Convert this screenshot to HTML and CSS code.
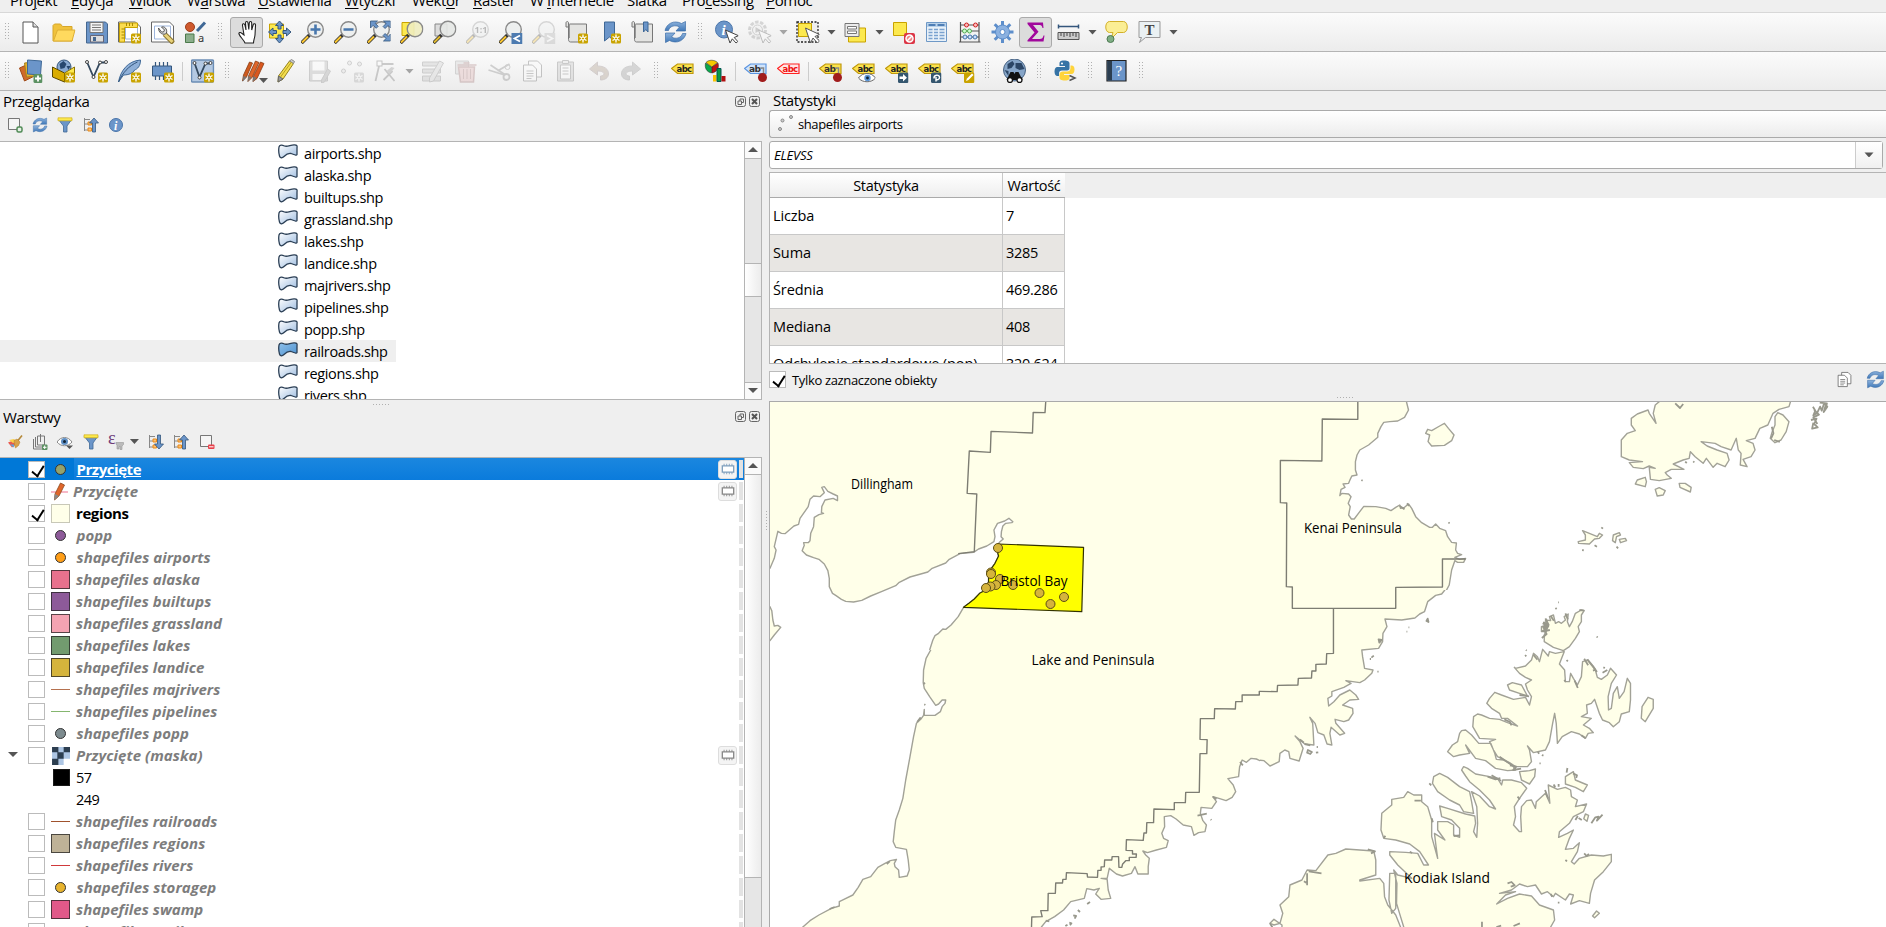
FILE: index.html
```html
<!DOCTYPE html>
<html lang="pl">
<head>
<meta charset="utf-8">
<title>QGIS</title>
<link rel="stylesheet" href="styles.css">
</head>
<body>
<svg class="defs" width="0" height="0" aria-hidden="true">
<defs>
<linearGradient id="gShp" x1="0" y1="0" x2="1" y2="1"><stop offset="0" stop-color="#fff"/><stop offset="1" stop-color="#9dbce0"/></linearGradient>
<linearGradient id="gShpOn" x1="0" y1="0" x2="1" y2="1"><stop offset="0" stop-color="#8fc0ea"/><stop offset="1" stop-color="#4d92d0"/></linearGradient>
<linearGradient id="gBlue" x1="0" y1="0" x2="0" y2="1"><stop offset="0" stop-color="#8db2dc"/><stop offset="1" stop-color="#3f78b8"/></linearGradient>
<symbol id="star" viewBox="0 0 24 24"><rect x="13.500" y="13.500" width="10" height="10" rx="1.500" fill="#c9a300"/><path d="M18.500 14.500v8M15 16.500l7 4M15 20.500l7-4" stroke="#fff" stroke-width="1.300"/><circle cx="18.500" cy="18.500" r="1.500" fill="#c9a300" stroke="#fff"/></symbol>
<symbol id="new" viewBox="0 0 24 24"><path d="M4.500 2h10l5 5v16h-15z" fill="#fff" stroke="#555"/><path d="M14.500 2v5h5" fill="#ddd" stroke="#555"/></symbol>
<symbol id="open" viewBox="0 0 24 24"><path d="M1.500 21V5.500L3 4h6l2 2.500h9.500V21z" fill="#f0c23c" stroke="#d6a62a"/><path d="M2 21 6 10h17.500L20.500 21z" fill="#ffd95e" stroke="#dcae34"/></symbol>
<symbol id="save" viewBox="0 0 24 24"><path d="M2 2h19l2 2v19H2z" fill="#6b95c9" stroke="#45678f"/><path d="M5.500 2.500h13v10h-13z" fill="#f4f4f4" stroke="#777"/><path d="M7.500 5h9M7.500 7.500h9M7.500 10h9" stroke="#777"/><path d="M6 15.500h13V22H6z" fill="#ddd" stroke="#667"/><path d="M8.500 17h3v4h-3z" fill="#45678f"/></symbol>
<symbol id="layout" viewBox="0 0 24 24"><path d="M1 2h17l5 5v15H1z" fill="#fff" stroke="#666"/><path d="M8 7h12v12H8z" fill="#fff" stroke="#9db5dd"/><path d="M2 3h18v4.500H7V22H2z" fill="#fbdc50" stroke="#c9a300"/><path d="M4 9h3M4 12h3M4 15h3M4 18h3M9 3v3M12 3v3M15 3v3" stroke="#a98900"/><use href="#star"/></symbol>
<symbol id="manager" viewBox="0 0 24 24"><path d="M1 2h18l4 4v16H1z" fill="#fff" stroke="#666"/><path d="M4 6h16v13H4z" fill="#fff" stroke="#9db5dd"/><path d="M14 14l9 9" stroke="#8a7430" stroke-width="5"/><path d="M14 14l8 8" stroke="#e8d27a" stroke-width="3"/><path d="M8 8c0 4 3 7 7 6l1-1c1-4-2-7-5-6l3 3-1 2-2 0z" fill="#ddd" stroke="#555"/></symbol>
<symbol id="style" viewBox="0 0 24 24"><circle cx="6.500" cy="7" r="4.500" fill="#cf5a2e" stroke="#9d3f1c"/><path d="M13.500 11l8-8.500" stroke="#3f6896" stroke-width="3"/><path d="M2 14h8.500v8.500H2z" fill="#8cae8c" stroke="#4b7a4b"/><text x="14.500" y="22" font-size="11" font-family="Noto Sans" fill="#333">a</text></symbol>
<symbol id="hand" viewBox="0 0 24 24"><path d="M8 23c-1-3-5-6-6-9-.5-1.500 1.500-2 2.800-.7L7 15 5.500 5.500c-.3-2 1.900-2.300 2.400-.5L9 10 8.500 3c0-2 2.300-2 2.500 0l.8 6.500.5-6.700c.2-1.800 2.400-1.600 2.400.3v7l1.500-5.300c.6-1.700 2.600-1.100 2.300.7L18 15c-.5 4-1.500 5-1.500 8z" transform="translate(2.500 0)" fill="#fff" stroke="#222" stroke-width="1.100"/></symbol>
<symbol id="pansel" viewBox="0 0 24 24"><path d="M2 4h14v14H2z" fill="#fce94f" stroke="#c9a300"/><path d="M12 1l4 4.500h-2.500V9h-3V5.500H8zM12 23l4-4.500h-2.500V15h-3v3.500H8zM1 12l4.500-4v2.500H9v3H5.500V16zM23.500 12L19 8v2.500h-3.500v3H19V16z" fill="#6b95c9" stroke="#34567c"/></symbol>
<symbol id="glass" viewBox="0 0 24 24"><path d="M1 23l8-8" stroke="#333" stroke-width="3.500"/><path d="M1.500 22.500l6-6" stroke="#fbc62f" stroke-width="2"/><circle cx="15" cy="9.500" r="7.800" fill="#eceeee" fill-opacity=".9" stroke="#8a8a8a" stroke-width="1.400"/></symbol>
<symbol id="zin" viewBox="0 0 24 24"><use href="#glass"/><path d="M15 4.500v10M10 9.500h10" stroke="#4877ad" stroke-width="2.600"/></symbol>
<symbol id="zout" viewBox="0 0 24 24"><use href="#glass"/><path d="M10 9.500h10" stroke="#4877ad" stroke-width="2.600"/></symbol>
<symbol id="zfull" viewBox="0 0 24 24"><use href="#glass"/><path d="M4 1h7L8.700 3.300l3 3-2 2-3-3L4 8zM24 1v7l-2.400-2.500-3 3-2-2 3-3L17 1zM24 21v-7l-2.400 2.500-3-3-2 2 3 3L17 21z" fill="#6b95c9" stroke="#34567c" stroke-width=".8"/></symbol>
<symbol id="zsel" viewBox="0 0 24 24"><path d="M2.500 2.500h12v13h-12z" fill="#fce94f" stroke="#c9a300"/><path d="M1 23l8-8" stroke="#333" stroke-width="3.500"/><path d="M1.500 22.500l6-6" stroke="#fbc62f" stroke-width="2"/><circle cx="15.500" cy="9" r="7.800" fill="#f0edc0" fill-opacity=".9" stroke="#8a8a8a" stroke-width="1.400"/></symbol>
<symbol id="zlay" viewBox="0 0 24 24"><path d="M2.500 4h12v12h-12z" fill="#ddd" stroke="#888"/><path d="M1 23l8-8" stroke="#333" stroke-width="3.500"/><path d="M1.500 22.500l6-6" stroke="#e0b92f" stroke-width="2"/><circle cx="15.500" cy="9" r="7.800" fill="#e6e8e6" fill-opacity=".9" stroke="#8a8a8a" stroke-width="1.400"/></symbol>
<symbol id="z11" viewBox="0 0 24 24"><use href="#glass"/><text x="9" y="13" font-size="9" font-weight="bold" font-family="Noto Sans" fill="#333">1:1</text></symbol>
<symbol id="zprev" viewBox="0 0 24 24"><use href="#glass"/><path d="M13 13h11v11H13z" fill="#4d7bb0"/><path d="M21.500 15.500L16 18.500l5.500 3" stroke="#fff" stroke-width="1.800" fill="none"/></symbol>
<symbol id="znext" viewBox="0 0 24 24"><use href="#glass"/><path d="M13 13h11v11H13z" fill="#aaa"/><path d="M15.500 15.500l5.500 3-5.500 3" stroke="#fff" stroke-width="1.800" fill="none"/></symbol>
<symbol id="map" viewBox="0 0 24 24"><path d="M5 4h17v18H6c-2 0-2-2-2-4V3c0-2-2.500-2-2.500 0v4H4" fill="#e4e4e2" stroke="#777"/><path d="M5 4v14" stroke="#999"/></symbol>
<symbol id="mapnew" viewBox="0 0 24 24"><use href="#map"/><use href="#star"/></symbol>
<symbol id="bmnew" viewBox="0 0 24 24"><path d="M7 2h10v19l-5-4-5 4z" fill="#6b95c9" stroke="#3f6896"/><use href="#star"/></symbol>
<symbol id="bm" viewBox="0 0 24 24"><use href="#map"/><path d="M13 2h4.500v10l-2.200-2.500L13 12z" fill="#6b95c9" stroke="#3f6896"/></symbol>
<symbol id="refresh" viewBox="0 0 24 24"><path d="M1.500 10.500C3 4 10-.5 18 3.500l4-2V11H12.500l3.500-4C12 4.500 6 6 5 10.500z" fill="url(#gBlue)" stroke="#3d6ea8" stroke-width=".7"/><path d="M22.500 13.500C21 20 14 24.500 6 20.500l-4 2V13h9.500L8 17c4 2.500 10 1 11-3.500z" fill="url(#gBlue)" stroke="#3d6ea8" stroke-width=".7"/></symbol>
<symbol id="cursor" viewBox="0 0 24 24"><path d="M11 10l4.500 13 2.300-4.200L21.500 23l1.800-1.500-3.600-4 4.300-1.800z" fill="#fff" stroke="#444"/></symbol>
<symbol id="info" viewBox="0 0 24 24"><circle cx="9.500" cy="9.500" r="8.500" fill="#6b95c9" stroke="#4a75aa"/><text x="7" y="15" font-size="15" font-weight="bold" font-style="italic" font-family="Liberation Serif" fill="#fff">i</text><use href="#cursor"/></symbol>
<symbol id="action" viewBox="0 0 24 24"><circle cx="10" cy="10" r="8" fill="#eee" stroke="#888" stroke-width="3" stroke-dasharray="3.500 1.500"/><circle cx="10" cy="10" r="5" fill="none" stroke="#777"/><path d="M8 7l5 3-5 3z" fill="#777"/><use href="#cursor"/></symbol>
<symbol id="select" viewBox="0 0 24 24"><path d="M1.500 2h21v20h-21z" fill="#eee" stroke="#222" stroke-dasharray="2 1.500" stroke-width="1.300"/><path d="M3 3.500h13v13H3z" fill="#fce94f" stroke="#c9a300"/><path d="M10 8l5 15 2.500-5 4.500 5 2-2-4.500-4.500 4.500-2z" fill="#fff" stroke="#555"/></symbol>
<symbol id="form" viewBox="0 0 24 24"><path d="M5 8h17v14H5z" fill="#fce94f" stroke="#c9a300"/><path d="M1.500 3.500h14v13h-14z" fill="#ececec" stroke="#777"/><path d="M4 6.500h9v2.500H4zM4 11h9v2.500H4z" fill="#fff" stroke="#777"/></symbol>
<symbol id="desel" viewBox="0 0 24 24"><path d="M2 2.500h13v13H2z" fill="#fce94f" stroke="#c9a300"/><rect x="12.500" y="13" width="11" height="11" rx="2" fill="#dc3545"/><circle cx="18" cy="18.500" r="3.500" fill="#e88" stroke="#fff" stroke-width="1.500"/><path d="M15.500 21l5-5" stroke="#fff" stroke-width="1.500"/></symbol>
<symbol id="table" viewBox="0 0 24 24"><path d="M2 2.500h20v19H2z" fill="#e9f1f8" stroke="#6e98c6"/><path d="M2.500 3h19v4h-19z" fill="#b9d2ea"/><path d="M4 5h7M13 5h7" stroke="#4f7fb6" stroke-width="2"/><path d="M4 9.500h4M9.500 9.500h4M15 9.500h5M4 12.500h4M9.500 12.500h4M15 12.500h5M4 15.500h4M9.500 15.500h4M15 15.500h5M4 18.500h4M9.500 18.500h4M15 18.500h5" stroke="#7aa2cf" stroke-width="1.300"/></symbol>
<symbol id="abacus" viewBox="0 0 24 24"><path d="M3 2v20M21.500 2v20M1.500 22h21.500M3 5h18.500M3 11h18.500M3 17h18.500" stroke="#555" fill="none" stroke-width="1.200"/><circle cx="9" cy="5" r="2" fill="#fbb" stroke="#c22"/><circle cx="18" cy="5" r="2" fill="#fbb" stroke="#c22"/><circle cx="7" cy="11" r="2" fill="#cfc" stroke="#5a5"/><circle cx="12" cy="11" r="2" fill="#cfc" stroke="#5a5"/><circle cx="7.500" cy="17" r="2" fill="#cdf" stroke="#47a"/><circle cx="12.500" cy="17" r="2" fill="#cdf" stroke="#47a"/><circle cx="17.500" cy="17" r="2" fill="#cdf" stroke="#47a"/></symbol>
<symbol id="gear" viewBox="0 0 24 24"><path d="M12 1v22M1 12h22M4.200 4.200l15.600 15.600M4.200 19.800L19.800 4.200" stroke="#5d8ecb" stroke-width="3"/><circle cx="12" cy="12" r="7" fill="#8bb1e0" stroke="#5d8ecb"/><circle cx="12" cy="12" r="2.500" fill="#fff" stroke="#5d8ecb"/></symbol>
<symbol id="sigma" viewBox="0 0 24 24"><path d="M4 2.500h15.500l.5 5.500h-1c-.5-2.500-1.500-3-4-3H9.500l5.500 6.800L8.500 19H16c2.500 0 3.500-1 4-3.500h1L20 21.500H4v-1.300l7-7.700L4 4z" fill="#a1089c"/></symbol>
<symbol id="ruler" viewBox="0 0 24 24"><path d="M2 4.500v4M22 4.500v4M2 6.500h20" stroke="#34567c" stroke-width="1.500"/><path d="M1.500 12.500h21v7h-21z" fill="#ccc" stroke="#555"/><path d="M4.500 13v3M7.500 13v4M10.500 13v3M13.500 13v4M16.500 13v3M19.500 13v4" stroke="#444"/></symbol>
<symbol id="tip" viewBox="0 0 24 24"><path d="M5 1.500h14c5 0 5 11 0 11h-6L6.500 19l2-6.500H5c-5 0-5-11 0-11z" fill="#fbee94" stroke="#d2b02a"/><circle cx="6" cy="19" r="3.500" fill="#7fae84" stroke="#4d7a52"/></symbol>
<symbol id="annot" viewBox="0 0 24 24"><path d="M1.500 1.500h21v16H8L2 22.500l2-5H1.500z" fill="#eaf1f3" stroke="#999"/><text x="7" y="14.500" font-size="15" font-family="Liberation Serif" font-weight="bold" fill="#444">T</text></symbol>
<symbol id="dsm" viewBox="0 0 24 24"><path d="M1 9l9-4 6 12-10 5z" fill="#cf6a2a" stroke="#a04a18"/><path d="M6 4l10-1 2 14-10 1z" fill="#e2b22e" stroke="#a8821a"/><path d="M9 1l14 1-1 14-13-1z" fill="#6b95c9" stroke="#3f6896"/><rect x="15" y="15" width="9" height="9" rx="1.500" fill="#5b9162"/><path d="M19.500 16.500v6M16.500 19.500h6" stroke="#fff" stroke-width="1.800"/></symbol>
<symbol id="gpkg" viewBox="0 0 24 24"><circle cx="12.500" cy="8" r="7" fill="#8aaad2" stroke="#34567c"/><path d="M8 5l4-3 3 3-2 4-4 1zM15 7l4 0-2 4z" fill="#27476f"/><path d="M1 8l12 6v9L1 18z" fill="#d9ac00" stroke="#5a4800"/><path d="M13 14l10-6v9l-10 6z" fill="#fce94f" stroke="#8a7000"/><use href="#star"/></symbol>
<symbol id="vect" viewBox="0 0 24 24"><path d="M2.500 3L9 18 15.500 3.500h6" fill="none" stroke="#34495e" stroke-width="1.800"/><g fill="#fff" stroke="#444"><circle cx="2.500" cy="3" r="1.500"/><circle cx="9" cy="18" r="1.500"/><circle cx="15.500" cy="3.500" r="1.500"/><circle cx="21.500" cy="3" r="1.500"/></g></symbol>
<symbol id="shpnew" viewBox="0 0 24 24"><use href="#vect"/><use href="#star"/></symbol>
<symbol id="feather" viewBox="0 0 24 24"><path d="M1 23C3 12 10 2 23 1c0 6-3 9-6 10-1 3-6 5-11 5z" fill="#8fb0d8" stroke="#3f6896"/><path d="M1 23C5 14 11 7 20 3" stroke="#34567c" fill="none"/><use href="#star"/></symbol>
<symbol id="chip" viewBox="0 0 24 24"><path d="M5 3v18M9 3v18M13 3v18M17 3v18" stroke="#34567c" stroke-width="1.200"/><path d="M2 7h19v10H2z" fill="#6b95c9" stroke="#34567c"/></symbol>
<symbol id="chipnew" viewBox="0 0 24 24"><use href="#chip"/><use href="#star"/></symbol>
<symbol id="virt" viewBox="0 0 24 24"><rect x="1" y="1" width="22" height="22" rx="1" fill="#b4c9e2" stroke="#6b8db5" stroke-width="1.500"/><path d="M4 4l5 14L15 4.500h5" fill="none" stroke="#34495e" stroke-width="1.800"/><g fill="#fff" stroke="#444"><circle cx="4" cy="4" r="1.500"/><circle cx="9" cy="18.500" r="1.500"/><circle cx="15" cy="4.500" r="1.500"/><circle cx="20" cy="4" r="1.500"/></g><use href="#star"/></symbol>
<symbol id="pens" viewBox="0 0 24 24"><g stroke="#8a3d14" stroke-width=".8"><path d="M2 16l6-13 3 1-6 14-4 4z" fill="#cf5a1e"/><path d="M7 17l7-15 3.500 1.500-7 15-4 4z" fill="#e0662a"/><path d="M12 17l7-14 3.500 1.500-7 15-4 3z" fill="#d9571f"/></g><path d="M2 17l3 1-4 5zM7 17l3 1-4 5zM12 17l3 2-4 4z" fill="#777"/></symbol>
<symbol id="pencil" viewBox="0 0 24 24"><path d="M4 17L15 2l4 2.500L8.500 20 3.500 23z" fill="#f3dd50" stroke="#94821d"/><path d="M15 2l4 2.500 1-2L17 .5z" fill="#ccc" stroke="#888"/><path d="M4 17l4.500 3-5 3z" fill="#999" stroke="#666"/><path d="M6 18L17 3" stroke="#b9a220"/></symbol>
<symbol id="gsave" viewBox="0 0 24 24"><path d="M2 2h18v20H2z" fill="#aaa" stroke="#777"/><path d="M5 2.500h12v9H5zM5 15h12v6H5z" fill="#fff"/><path d="M14 21l6-11 3 2-6 11-3 1z" fill="#999" stroke="#777"/></symbol>
<symbol id="gpts" viewBox="0 0 24 24"><g fill="#ddd" stroke="#777"><circle cx="9" cy="4" r="2"/><circle cx="19" cy="5" r="2"/><circle cx="3" cy="12" r="2"/></g><use href="#star"/></symbol>
<symbol id="gnode" viewBox="0 0 24 24"><path d="M2 22L6 5h14M10 21l9-9M11 10l10 12" fill="none" stroke="#666" stroke-width="1.800"/><path d="M13 12l5-4 3 1-5 6z" fill="#888"/><rect x="3.500" y="2" width="5" height="5" fill="#fff" stroke="#555"/></symbol>
<symbol id="gtab" viewBox="0 0 24 24"><path d="M1 3h18v4H1zM1 10h18v4H1zM1 17h18v5H1z" fill="#bbb" stroke="#777"/><path d="M8 19L18 2l4 2-10 18-4 1z" fill="#ccc" stroke="#777"/></symbol>
<symbol id="gdel" viewBox="0 0 24 24"><path d="M1 2h13v13H1z" fill="#ccc" stroke="#888"/><path d="M4 8h16l-1 15H6zM3 6h19M9 4h6" fill="#daa" stroke="#966" stroke-width="1.500"/><path d="M9 10v10M12.500 10v10M16 10v10" stroke="#966"/></symbol>
<symbol id="cut" viewBox="0 0 24 24"><path d="M1 11l16 5M3 6l15 10M22 5L10 12" stroke="#777" stroke-width="1.800"/><circle cx="19" cy="18" r="3" fill="none" stroke="#777" stroke-width="1.800"/><circle cx="20" cy="8" r="2.500" fill="none" stroke="#777"/></symbol>
<symbol id="copy" viewBox="0 0 24 24"><path d="M8 2h9l4 4v12H8z" fill="#fff" stroke="#555"/><path d="M3 6h9l4 4v12H3z" fill="#fff" stroke="#555"/><path d="M6 12h7M6 14.500h7M6 17h7M6 19.500h5" stroke="#666"/></symbol>
<symbol id="paste" viewBox="0 0 24 24"><path d="M4 3h16v19H4z" fill="#bbb" stroke="#666"/><path d="M7 6h10v14H7z" fill="#fff" stroke="#666"/><path d="M9 1.500h6v3H9zM9 9h6M9 12h6M9 15h6" stroke="#666" fill="#ddd"/></symbol>
<symbol id="undo" viewBox="0 0 24 24"><path d="M3 10l8-7v4c7 0 11 3 11 8 0 4-4 6-8 6v-4c5 0 5-5-3-5v4z" fill="#a08c78" stroke="#877"/></symbol>
<symbol id="lab" viewBox="0 0 24 24"><path d="M1 9.500L7 5h15.500v9.500H7z" fill="#fbe24c" stroke="#c0980c" stroke-width="1.200"/><text x="6" y="12.800" font-size="8.500" font-weight="bold" font-family="DejaVu Sans" letter-spacing="-.6" fill="#222">abc</text></symbol>
<symbol id="labRed" viewBox="0 0 24 24"><path d="M1 9.500L7 5h15.500v9.500H7z" fill="#ffe6e6" stroke="#f22" stroke-width="1.200"/><text x="6" y="12.800" font-size="8.500" font-weight="bold" font-family="DejaVu Sans" letter-spacing="-.6" fill="#e11">abc</text></symbol>
<symbol id="labBlue" viewBox="0 0 24 24"><path d="M1 9.500L7 5h15.500v9.500H7z" fill="#cfe3fb" stroke="#5a94e0" stroke-width="1.200"/><text x="5.500" y="13" font-size="9" font-weight="bold" font-family="DejaVu Sans" letter-spacing="-.6" fill="#333">ab</text><path d="M17.500 10v-1h2.500V16" stroke="#888" fill="none" stroke-width="1.500"/><circle cx="19" cy="18.500" r="4.500" fill="#a11c1c"/></symbol>
<symbol id="labPin" viewBox="0 0 24 24"><path d="M1 9.500L7 5h15.500v9.500H7z" fill="#fbe24c" stroke="#c0980c" stroke-width="1.200"/><text x="5.500" y="13" font-size="9" font-weight="bold" font-family="DejaVu Sans" letter-spacing="-.6" fill="#333">ab</text><path d="M17.500 10v-1h2.500V16" stroke="#888" fill="none" stroke-width="1.500"/><circle cx="19" cy="18.500" r="4.500" fill="#a11c1c"/></symbol>
<symbol id="labEye" viewBox="0 0 24 24"><use href="#lab"/><path d="M7 19c4-6 13-6 17 0-4 5-13 5-17 0z" fill="#fff" stroke="#666"/><circle cx="16" cy="19" r="3.200" fill="#5b97d8"/><circle cx="16" cy="19" r="1.400" fill="#123"/></symbol>
<symbol id="labMove" viewBox="0 0 24 24"><use href="#lab"/><rect x="13.500" y="13.500" width="10.500" height="10.500" rx="1.500" fill="#34566f"/><path d="M15 17.500h3.500V15l4 3.800-4 3.700V20H15z" fill="#fff"/></symbol>
<symbol id="labRot" viewBox="0 0 24 24"><use href="#lab"/><rect x="13.500" y="13.500" width="10.500" height="10.500" rx="1.500" fill="#34566f"/><path d="M16.500 19.500c-.5-4 5.500-4.500 5.500-1 0 2-2 2.500-3.500 2M18.500 18v4.500" stroke="#fff" stroke-width="1.400" fill="none"/></symbol>
<symbol id="labEd" viewBox="0 0 24 24"><use href="#lab"/><rect x="13.500" y="13.500" width="10.500" height="10.500" rx="1.500" fill="#c9a300"/><path d="M15.500 22l1-2.500 5-5 1.500 1.500-5 5z" fill="#fff"/></symbol>
<symbol id="pie" viewBox="0 0 24 24"><path d="M2 4l6 4v6C3 13 1 9 2 4z" fill="#0aa94e" stroke="#222" stroke-width=".5"/><path d="M2.500 3.500C5 .5 11 .5 14 3.500L8.500 8z" fill="#f6c900" stroke="#222" stroke-width=".5"/><path d="M14.500 4c1.500 5-1 9-6 10V8z" fill="#c01414" stroke="#222" stroke-width=".5"/><path d="M9.500 16h3.500v6.500H9.500z" fill="#fac300"/><path d="M13.500 9.500h4v13h-4z" fill="#0a9a44" stroke="#055"/><path d="M18 17h4v5.500h-4z" fill="#b11010"/></symbol>
<symbol id="globe" viewBox="0 0 24 24"><circle cx="12" cy="11" r="11" fill="#86a5c8" stroke="#4a6483"/><path d="M5 5l5-3 2 3-3 4-4 1zM13 4l6 0 3 6-5 1-4-2zM2 11l4 1v5z" fill="#2c4666"/><path d="M4 21l4-8h3l1 2 1-2h3l4 8z" fill="#111"/><circle cx="7.500" cy="21" r="2.500" fill="#fff" stroke="#111" stroke-width="1.300"/><circle cx="17" cy="21" r="2.500" fill="#fff" stroke="#111" stroke-width="1.300"/></symbol>
<symbol id="python" viewBox="0 0 24 24"><path d="M10.500 1.500c-4 0-4.500 1.500-4.500 3v2.500h5.500v1H4c-2 0-3 2-3 4.500S2 17 4 17h1.500v-2.500c0-2 1-3 3-3h5c2 0 2.500-1 2.500-2.500V4.500c0-2-1.500-3-5.500-3z" fill="#3673a5"/><path d="M11.500 21.500c4 0 4.500-1.500 4.500-3V16h-5.500v-1H18c2 0 3-2 3-4.500S20 6.500 18 6.500h-1V9c0 2.500-1.500 3.500-3.500 3.500h-4C7.500 12.500 6 13.500 6 15.500v3c0 2 1.500 3 5.500 3z" fill="#ffd43b"/><circle cx="8.500" cy="4.500" r="1" fill="#fff"/><path d="M16 16.500l5.500 2.500-5.500 2.500" stroke="#555" stroke-width="1.500" fill="none"/></symbol>
<symbol id="help" viewBox="0 0 24 24"><path d="M2.500 1.500h19v20.500h-19z" fill="#6b95c9" stroke="#222" stroke-width="1.200"/><path d="M3 2h4.500v19.500H3z" fill="#2c3e50"/><text x="11" y="17" font-size="15" font-family="Liberation Serif" fill="#fff">?</text></symbol>
<symbol id="shp" viewBox="0 0 20 15"><path d="M1 3C1.500.6 4 .8 6.500 2 9 3 12 1.300 16 .9 19.500.7 19.200 2 19 4V10.500C18.500 12 16 10.500 13 9.500 10 9 8 10.500 6 12.500 4 14.500 2 14 1.500 12 .6 9 .5 6 1 3z" stroke="#2b3f55" stroke-width="1.300"/></symbol>
<symbol id="addl" viewBox="0 0 16 16"><path d="M1.500 1.500h11v11h-11z" fill="#f5f5f5" stroke="#777"/><rect x="10" y="10" width="5" height="5" rx="1.500" fill="#e5f0e5" stroke="#4f8a55" stroke-width="1.500"/></symbol>
<symbol id="reml" viewBox="0 0 16 16"><path d="M1.500 1.500h11v11h-11z" fill="#f5f5f5" stroke="#777"/><rect x="9" y="10.500" width="6.500" height="4.500" rx="1" fill="#e8404a"/><path d="M10 12.800h4.500" stroke="#fff"/></symbol>
<symbol id="funnel" viewBox="0 0 16 16"><path d="M1 2h14l-5 7v6H6.500V9z" fill="#6b95c9" stroke="#3f6896" stroke-width=".8"/><path d="M1 .800h14v3H1z" fill="#fce94f" stroke="#c9a300" stroke-width=".6"/></symbol>
<symbol id="tree" viewBox="0 0 16 16"><path d="M1.500 1v13M1.500 2.500H7M1.500 7H5M1.500 13H5" stroke="#888" fill="none"/><path d="M5 5h3.500v3H5zM5 11h3.500v3H5z" fill="#ffc070" stroke="#e88a1a"/></symbol>
<symbol id="collapse" viewBox="0 0 16 16"><use href="#tree"/><path d="M11 1l4.500 5h-3v9h-3V6h-3z" fill="#6b95c9" stroke="#34567c" stroke-width=".8"/></symbol>
<symbol id="expand" viewBox="0 0 16 16"><use href="#tree"/><path d="M11 15l4.500-5h-3V1h-3v9h-3z" fill="#6b95c9" stroke="#34567c" stroke-width=".8"/></symbol>
<symbol id="infos" viewBox="0 0 16 16"><circle cx="8" cy="8" r="6.500" fill="#6b95c9" stroke="#4a75aa"/><text x="6" y="12.500" font-size="12" font-weight="bold" font-style="italic" font-family="Liberation Serif" fill="#fff">i</text></symbol>
<symbol id="brush" viewBox="0 0 16 16"><path d="M1 8.500l5-2 4 3-5 4z" fill="#e85a50"/><path d="M2 6l5-1 3 3-4 1z" fill="#fbd24a"/><path d="M3 10.500l4 0 0 3z" fill="#59a4e0"/><path d="M10.500 7l4.500-5.500" stroke="#b5893a" stroke-width="1.600"/><path d="M7 6.500l3-1.500 3 3-1.500 3.500-3 2.500-1-3z" fill="#d9a24a" stroke="#b07a2a" stroke-width=".5"/></symbol>
<symbol id="grp" viewBox="0 0 16 16"><path d="M1.500 5v10h10M3.500 3v10h8M5.500 2h7v9h-7zM8.500 0v8" fill="none" stroke="#777"/><rect x="10" y="10.500" width="5.500" height="5.500" rx="1" fill="#5b9162"/><path d="M12.700 11.500v3.500M11 13.300h3.500" stroke="#fff"/></symbol>
<symbol id="eye" viewBox="0 0 16 16"><path d="M0 8c4-6 11-6 15 0-4 5-11 5-15 0z" fill="#fff" stroke="#888"/><circle cx="7.500" cy="7.500" r="3.500" fill="#5f8fc4"/><circle cx="7.500" cy="7.500" r="1.500" fill="#123"/><path d="M9 11.500h7L12.500 15z" fill="#555"/></symbol>
<symbol id="eps" viewBox="0 0 16 16"><text x="0" y="10" font-size="18" font-family="Liberation Serif" fill="#6d3a78">ε</text><path d="M8 8.500h7.500v2L14 12v3.500h-2V12l-1 1v2H9v-4l-1-1z" fill="#bbb" stroke="#999" stroke-width=".6"/></symbol>
<symbol id="chipg" viewBox="0 0 16 16"><path d="M3.500 2v12M6.500 2v12M9.500 2v12M12.500 2v12" stroke="currentColor"/><path d="M1.500 4.500h13v7h-13z" fill="#fff" stroke="currentColor" stroke-width="1.500"/></symbol>
</defs>
</svg>

<div class="window">
<nav class="menubar">
<span>Pro<u>j</u>ekt</span><span><u>E</u>dycja</span><span><u>W</u>idok</span><span>W<u>a</u>rstwa</span><span><u>U</u>stawienia</span><span><u>W</u>tyczki</span><span>Wekt<u>o</u>r</span><span><u>R</u>aster</span><span>W <u>I</u>nternecie</span><span>Siatka</span><span>Pro<u>c</u>essing</span><span><u>P</u>omoc</span>
</nav>
<div class="toolbar">
<i class="grip first"></i>
<svg class="ic"><use href="#new"/></svg><svg class="ic"><use href="#open"/></svg><svg class="ic"><use href="#save"/></svg><svg class="ic"><use href="#layout"/></svg><svg class="ic"><use href="#manager"/></svg><svg class="ic"><use href="#style"/></svg>
<i class="grip"></i>
<span class="pressed"><svg class="ic"><use href="#hand"/></svg></span><svg class="ic"><use href="#pansel"/></svg><svg class="ic"><use href="#zin"/></svg><svg class="ic"><use href="#zout"/></svg><svg class="ic"><use href="#zfull"/></svg><svg class="ic"><use href="#zsel"/></svg><svg class="ic"><use href="#zlay"/></svg><svg class="ic off"><use href="#z11"/></svg><svg class="ic"><use href="#zprev"/></svg><svg class="ic off"><use href="#znext"/></svg><svg class="ic"><use href="#mapnew"/></svg><svg class="ic"><use href="#bmnew"/></svg><svg class="ic"><use href="#bm"/></svg><svg class="ic"><use href="#refresh"/></svg>
<i class="grip"></i>
<svg class="ic"><use href="#info"/></svg><svg class="ic off"><use href="#action"/></svg><b class="arr dim"></b><svg class="ic"><use href="#select"/></svg><b class="arr"></b><svg class="ic"><use href="#form"/></svg><b class="arr"></b><svg class="ic"><use href="#desel"/></svg><svg class="ic"><use href="#table"/></svg><svg class="ic"><use href="#abacus"/></svg><svg class="ic"><use href="#gear"/></svg><span class="pressed"><svg class="ic"><use href="#sigma"/></svg></span><svg class="ic"><use href="#ruler"/></svg><b class="arr"></b><svg class="ic"><use href="#tip"/></svg><svg class="ic"><use href="#annot"/></svg><b class="arr"></b>
</div>
<div class="toolbar">
<i class="grip first"></i>
<svg class="ic"><use href="#dsm"/></svg><svg class="ic"><use href="#gpkg"/></svg><svg class="ic"><use href="#shpnew"/></svg><svg class="ic"><use href="#feather"/></svg><svg class="ic"><use href="#chipnew"/></svg><i class="sep"></i><svg class="ic"><use href="#virt"/></svg>
<i class="grip"></i>
<span class="menuic"><svg class="ic"><use href="#pens"/></svg><b class="arr"></b></span><svg class="ic"><use href="#pencil"/></svg><svg class="ic off"><use href="#gsave"/></svg><svg class="ic off grey"><use href="#gpts"/></svg><svg class="ic off"><use href="#gnode"/></svg><b class="arr dim"></b><svg class="ic off"><use href="#gtab"/></svg><svg class="ic off"><use href="#gdel"/></svg><svg class="ic off"><use href="#cut"/></svg><svg class="ic off"><use href="#copy"/></svg><svg class="ic off"><use href="#paste"/></svg><svg class="ic off"><use href="#undo"/></svg><svg class="ic off flip grey"><use href="#undo"/></svg>
<i class="grip"></i>
<svg class="ic"><use href="#lab"/></svg><svg class="ic"><use href="#pie"/></svg><i class="sep"></i><svg class="ic"><use href="#labBlue"/></svg><svg class="ic"><use href="#labRed"/></svg><i class="sep wide"></i><svg class="ic"><use href="#labPin"/></svg><svg class="ic"><use href="#labEye"/></svg><svg class="ic"><use href="#labMove"/></svg><svg class="ic"><use href="#labRot"/></svg><svg class="ic"><use href="#labEd"/></svg>
<i class="grip last"></i><svg class="ic"><use href="#globe"/></svg><i class="grip"></i><svg class="ic"><use href="#python"/></svg><i class="grip"></i><svg class="ic"><use href="#help"/></svg><i class="grip"></i>
</div>

<div class="main">
<div class="left">
<section class="dock browser">
<header><h2>Przeglądarka</h2><svg class="wb" viewBox="0 0 26 12"><g fill="none" stroke="#666"><rect x=".5" y=".5" width="10" height="10" rx="2"/><path d="M5 3h3.500v3.500H5z"/><path d="M3 5h3.500v3.500H3z" fill="#efefef"/><rect x="14.500" y=".5" width="10" height="10" rx="2"/></g><path d="M17 3l5 5M22 3l-5 5" stroke="#555" stroke-width="2"/></svg></header>
<div class="mini"><svg><use href="#addl"/></svg><svg><use href="#refresh"/></svg><svg><use href="#funnel"/></svg><svg><use href="#collapse"/></svg><svg><use href="#infos"/></svg></div>
<div class="view">
<ul class="files">
<li><svg><use href="#shp"/></svg>airports.shp</li><li><svg><use href="#shp"/></svg>alaska.shp</li><li><svg><use href="#shp"/></svg>builtups.shp</li><li><svg><use href="#shp"/></svg>grassland.shp</li><li><svg><use href="#shp"/></svg>lakes.shp</li><li><svg><use href="#shp"/></svg>landice.shp</li><li><svg><use href="#shp"/></svg>majrivers.shp</li><li><svg><use href="#shp"/></svg>pipelines.shp</li><li><svg><use href="#shp"/></svg>popp.shp</li><li class="hover"><svg><use href="#shp"/></svg>railroads.shp</li><li><svg><use href="#shp"/></svg>regions.shp</li><li><svg><use href="#shp"/></svg>rivers.shp</li>
</ul>
<div class="scroll"><b class="up"></b><i class="track t1"></i><i class="thumb h1"></i><i class="track"></i><b class="down"></b></div>
</div>
</section>
<div class="hsplit"><i></i></div>
<section class="dock layers">
<header><h2>Warstwy</h2><svg class="wb" viewBox="0 0 26 12"><g fill="none" stroke="#666"><rect x=".5" y=".5" width="10" height="10" rx="2"/><path d="M5 3h3.500v3.500H5z"/><path d="M3 5h3.500v3.500H3z" fill="#efefef"/><rect x="14.500" y=".5" width="10" height="10" rx="2"/></g><path d="M17 3l5 5M22 3l-5 5" stroke="#555" stroke-width="2"/></svg></header>
<div class="mini"><svg><use href="#brush"/></svg><svg><use href="#grp"/></svg><svg><use href="#eye"/></svg><svg><use href="#funnel"/></svg><svg class="eps"><use href="#eps"/></svg><b class="arr"></b><svg><use href="#expand"/></svg><svg><use href="#collapse"/></svg><svg><use href="#reml"/></svg></div>
<div class="view">
<ul class="tree">
<li class="sel"><i class="cb on"></i><i class="pt" style="background:#93a26c"></i><span>Przycięte</span><em><svg><use href="#chipg"/></svg></em></li>
<li><i class="cb"></i><svg class="ed" viewBox="0 0 19 19"><path d="M0 10h17" stroke="#f4a0b4" stroke-width="1.500"/><path d="M4 12L9.500 1l4 2-5.500 11-4.500 4z" fill="#e0662a" stroke="#8a4a20" stroke-width=".8"/><path d="M4 12l4 2-5 4z" fill="#888"/></svg><span class="near">Przycięte</span><em><svg><use href="#chipg"/></svg></em></li>
<li class="act"><i class="cb on"></i><i class="sq" style="background:#ffffe9;border-color:#c8c8b8"></i><span>regions</span></li>
<li><i class="cb"></i><i class="pt" style="background:#8d5a99"></i><span>popp</span></li>
<li><i class="cb"></i><i class="pt" style="background:#ff9e17"></i><span>shapefiles airports</span></li>
<li><i class="cb"></i><i class="sq" style="background:#e8718d"></i><span>shapefiles alaska</span></li>
<li><i class="cb"></i><i class="sq" style="background:#8d5a99"></i><span>shapefiles builtups</span></li>
<li><i class="cb"></i><i class="sq" style="background:#f4a3b2"></i><span>shapefiles grassland</span></li>
<li><i class="cb"></i><i class="sq" style="background:#729b6f"></i><span>shapefiles lakes</span></li>
<li><i class="cb"></i><i class="sq" style="background:#d5b43c"></i><span>shapefiles landice</span></li>
<li><i class="cb"></i><i class="ln" style="background:#b5714f"></i><span>shapefiles majrivers</span></li>
<li><i class="cb"></i><i class="ln" style="background:#85b66f"></i><span>shapefiles pipelines</span></li>
<li><i class="cb"></i><i class="pt" style="background:#7d8b8f"></i><span>shapefiles popp</span></li>
<li class="open"><i class="cb"></i><svg class="ras" viewBox="0 0 18 18"><path d="M1 1h17v11h-6v6H1z" fill="#adc6e4"/><path d="M1 1h6v5H1zM12 1h6v5h-6zM6 6h6v6H6zM1 12h6v6H1z" fill="#2c3e50"/></svg><span>Przycięte (maska)</span><em><svg><use href="#chipg"/></svg></em></li>
<li class="leaf"><i class="sq" style="background:#000"></i><span>57</span></li>
<li class="leaf"><i class="sq none"></i><span>249</span></li>
<li><i class="cb"></i><i class="ln" style="background:#a0522d"></i><span>shapefiles railroads</span></li>
<li><i class="cb"></i><i class="sq" style="background:#beb297"></i><span>shapefiles regions</span></li>
<li><i class="cb"></i><i class="ln" style="background:#d0393b"></i><span>shapefiles rivers</span></li>
<li><i class="cb"></i><i class="pt" style="background:#e7b32e"></i><span>shapefiles storagep</span></li>
<li><i class="cb"></i><i class="sq" style="background:#e15989"></i><span>shapefiles swamp</span></li>
<li><i class="cb"></i><i class="sq none"></i><span>shapefiles trails</span></li>
</ul>
<div class="scroll"><b class="up"></b><i class="thumb h2"></i><i class="track"></i></div>
</div>
</section>
</div>
<div class="vsplit"><i></i></div>
<div class="right">
<h2>Statystyki</h2>
<div class="combo layer"><svg viewBox="0 0 18 18" width="18" height="18"><g fill="#ccc" stroke="#888"><circle cx="3" cy="14" r="1.500"/><circle cx="5.500" cy="5.500" r="1.500"/><circle cx="14" cy="2" r="1.500"/></g></svg><span>shapefiles airports</span></div>
<div class="combo field"><span>ELEVSS</span><i><b class="arr"></b></i></div>
<div class="stats">
<div class="hd"><span>Statystyka</span><span>Wartość</span></div>
<div class="tr"><span>Liczba</span><span>7</span></div>
<div class="tr alt"><span>Suma</span><span>3285</span></div>
<div class="tr"><span>Średnia</span><span>469.286</span></div>
<div class="tr alt"><span>Mediana</span><span>408</span></div>
<div class="tr"><span>Odchylenie standardowe (pop)</span><span>320.624</span></div>
</div>
<div class="foot"><i class="cb on"></i><span>Tylko zaznaczone obiekty</span><svg><use href="#copy"/></svg><svg class="rf"><use href="#refresh"/></svg></div>
<div class="hsplit r"><i></i></div>
<svg class="map" viewBox="770 402 1116 525">
<svg x="760" y="390" width="500" height="260" viewBox="0 0 1400 780" preserveAspectRatio="none">
<path class="land" d="M-20-20H1420V800H-20z"/>
<path class="sea" d="M-20 540L28 535 40 505 45 480 40 470 50 424 60 430 70 431 95 408 108 403 112 385 135 350 140 328 150 318 168 320 180 308 173 292 180 290 190 304 205 312 217 318 217 332 205 325 182 330 173 350 172 368 178 370 165 374 152 382 150 410 142 430 140 452 135 458 122 458 124 466 118 482 130 495 150 503 165 508 180 522 190 542 194 565 194 590 203 610 213 617 228 628 240 634 262 636 285 631 310 618 340 605 380 587 390 577 420 561 470 546 482 535 520 519 530 508 560 491 598 487 612 477 635 468 655 455 658 440 655 420 665 400 685 393 697 385 708 395 705 398 688 400 680 408 676 425 675 440 681 447 672 455 667 462 663 478 668 498 658 520 648 535 640 560 640 575 632 600 615 610 600 627 585 640 570 652 555 680 535 705 520 718 512 717 500 730 490 737 484 750 475 780 465 800 465 850-20 850-20 760 28 752 40 735 58 712 50 706 40 708 36 690 33 662 28 650-20 640z"/>
<path class="edge" d="M800 36L798 68 765 67 763 129 647 124 645 187 586 183 580 310 607 312 600 485 555 491"/>
<path class="pick" d="M667 462L906 472 901 665 570 652 585 640 600 627 615 610 632 600 640 575 640 560 648 535 658 520 668 498 663 478z"/>
</svg>
<svg x="1260" y="390" width="626" height="200" viewBox="0 0 1568 600" preserveAspectRatio="none">
<path class="land" d="M-20-20H365L367 36 372 60 362 82 345 93 325 95 310 97 303 110 295 130 295 142 272 165 250 180 243 195 239 215 239 240 243 255 230 258 226 268 222 280 208 282 213 292 203 298 200 317 205 310 222 312 228 320 221 340 226 350 222 375 229 387 236 387 248 368 260 349 290 350 315 355 328 362 340 352 350 345 352 355 362 352 372 342 380 355 390 380 405 398 425 412 432 412 440 402 450 415 465 422 470 440 480 457 492 459 490 480 495 490 505 494 488 502 500 508 515 505 510 517 495 517 488 512 480 540 474 585 465 605V700H-20z"/>
<path class="edge" d="M245 30V88L156 87 155 213 51 211 51 338 67 339 66 590 81 591V620M340 620V592L457 591V507H515"/>
<path class="land" d="M462 100L472 115 486 135 480 152 462 166 430 168 421 155 425 135 415 130 420 118 430 122 450 108zM1005 30L990 45 985 70 992 100 975 70 972 60 945 72 930 85 930 105 940 122 920 130 905 150 905 200 925 210 958 215 925 218 935 232 960 236 975 228 990 235 975 232 978 268 1000 272 1030 265 1020 255 1015 248 1030 238 1062 238 1035 222 1060 210 1075 205 1078 185 1090 200 1110 220 1118 205 1135 232 1145 220 1165 230 1175 210 1170 190 1145 180 1120 168 1105 155 1140 160 1155 170 1180 180 1193 145 1198 180 1205 190 1203 225 1220 230 1210 208 1230 200 1240 180 1235 160 1218 152 1240 145 1252 115 1272 105 1285 70 1300 58 1325 50 1330 30zM1297 68L1310 75 1325 95 1318 125 1305 150 1290 158 1278 145 1283 125 1290 105 1290 80zM945 270L965 262 968 275 965 290 940 282zM990 298L1000 293 1015 302 1010 315 995 318zM1050 280L1065 280 1080 292 1078 306 1052 292zM808 422L825 430 845 440 850 430 858 435 850 445 838 447 825 462 798 460 797 455 815 450 815 435zM885 435L900 428 903 435 893 440 890 458 883 452zM900 448L915 445 918 452 903 458z"/>
<path class="bits" d="M1385 50l6 12-5 14 9-6 8-20 4 12 6-22 8 10-9 16 6-25M1380 90l14-4-6 16 9 10-14 4 3-18M1402 38l18 2-4 20M1388 60l12 14-14 8 10 20M1282 110l4 20-6 16M1040 40l12 14 8-12M1288 150l14 6M855 412l4 4M838 466l6 4M807 480l4 1M893 470l4 5M472 397l3 3M254 270l3 2M350 348l12 10M368 340l6 8M1065 215l4 4M1085 214l3 3"/>
</svg>
<svg x="760" y="650" width="500" height="277" viewBox="0 0 1400 831" preserveAspectRatio="none">
<path class="land" d="M-20-20H1420V860H-20z"/>
<path class="sea" d="M485-20L478 0 465 25 458 60 457 98 460 115 475 140 492 166 500 162 510 150 520 150 518 160 510 170 505 185 490 196 460 196 460 178 458 196 450 208 438 220 430 260 420 320 408 390 400 445 390 480 380 510 376 545 373 575 380 592 410 598 415 630 418 660 412 678 390 682 388 660 378 650 376 640 382 628 365 632 350 640 330 652 310 680 288 688 275 712 260 735 235 748 222 755 222 768 200 775 165 795 140 812 120 831 100 860-20 900-20-20z"/>
<path class="sea" d="M1420 340L1400 332 1390 327 1375 325 1362 337 1350 330 1343 350 1340 380 1310 386 1325 405 1332 425 1322 442 1305 452 1285 445 1268 440 1278 455 1265 475 1235 472 1233 490 1240 512 1250 525 1246 545 1228 548 1215 556 1208 530 1185 525 1165 507 1150 497 1132 500 1133 530 1125 550 1130 565 1143 572 1138 592 1110 600 1085 608 1072 603 1080 615 1090 625 1087 650 1087 672 1058 672 1050 650 1040 670 1015 678 998 672 978 655 972 685 955 685 972 688 975 720 982 745 955 748 940 732 950 715 935 720 915 716 908 745 870 755 850 780 825 800 800 815 788 831 788 900 1500 900z"/>
<path class="edge" d="M1448 104V125L1398 124V135H1350V155H1332L1331 177 1273 176 1272 206H1233L1232 268 1252 269 1251 311H1232L1230 427H1192L1191 458H1160V479L1103 477 1102 518H1083L1082 549H1075L1073 571 1026 569 1025 601 1043 602V612H1054L1053 622H1034V632H1024L1015 643 1013 652H1005L1004 620H986L985 630H965L964 650 955 651V661H946L945 682 917 681 916 671 858 668 857 688H848L847 699H828L827 730H807L806 782H786L790 800 761 801 760 840"/>
<path class="bits" d="M866 818l6 2-4 6M877 796l8 2-4 8M890 780l6 6M916 762l8-6M1225 497l26-6M1268 440l10 8M440 216l10-14M458 98l4 4M195 777l14-6M355 642l8-8M855 828l6-4M1262 508l2 2M1344 336l8 10M800 812l10 2M460 163l3 2"/>
</svg>
<svg x="1260" y="590" width="626" height="337" viewBox="0 0 1568 1011" preserveAspectRatio="none">
<path class="land" d="M-20-20H470L463 0 455 12 440 16 420 35 412 65 400 72 388 84 355 90 313 87 318 110 308 130 307 155 297 175 255 180 257 200 262 235 283 240 280 250 262 270 250 278 215 272 228 280 210 292 180 305 180 318 170 325 172 348 185 335 200 315 225 300 240 315 247 328 225 330 207 345 232 355 233 370 222 390 210 395 188 388 190 400 212 430 200 435 178 412 175 430 180 465 168 462 160 435 145 428 138 400 125 382 132 400 135 465 112 462 88 438 100 455 108 475 98 513 75 505 72 485 62 480 50 490 48 515 25 528 10 512-20 508z"/>
<path class="edge" d="M81-10V55H340V-10M184 55V190L167 191 166 222 140 223V243H130L129 264 96 265 95 285 44 286 43 305-10 304"/>
<path class="land" d="M805 60L790 70 782 95 775 110 770 95 772 72 762 80 765 90 755 100 748 95 740 100 735 75 725 80 728 92 715 90 718 105 705 110 705 125 720 115 712 135 712 155 735 172 760 182 775 170 790 145 800 125 797 110 805 95 805 75 812 62zM637 232L650 250 665 262 680 270 665 282 670 300 680 320 675 345 665 322 635 328 605 315 588 307 575 325 568 340 580 355 600 370 605 385 620 385 645 408 620 398 600 388 575 385 555 375 545 372 535 380 533 410 550 445 590 448 575 455 585 480 595 500 625 518 640 530 670 530 680 515 675 480 670 468 685 488 715 480 725 455 733 400 738 370 742 400 745 460 757 440 780 425 800 432 815 445 822 430 835 428 825 415 810 405 830 385 805 380 820 370 818 345 830 340 838 328 850 370 858 390 875 398 885 410 900 395 905 372 925 365 928 330 928 280 920 265 912 305 900 325 895 290 885 310 880 355 873 360 872 320 880 280 893 255 878 235 870 255 855 268 845 262 840 240 820 210 808 215 805 260 795 285 785 265 778 250 775 275 765 275 763 240 750 222 757 200 762 185 740 190 725 185 722 198 708 178 700 215 695 200 685 190 680 210 665 228 640 235zM505 422L515 420 530 435 548 460 578 460 588 490 592 508 610 510 632 525 640 540 620 542 590 535 565 512 540 505 515 465 525 490 500 495 485 500 470 485 482 465 495 455 500 430zM632 278L655 285 670 318 650 310 625 300 620 285z"/>
<path class="land" d="M510 530L520 535 540 552 575 560 595 565 605 585 608 570 630 570 655 578 668 595 650 625 637 650 640 680 635 705 650 725 655 725 653 680 655 650 668 632 680 630 690 655 692 635 715 610 726 640 722 585 745 598 765 592 778 600 780 620 795 630 790 650 818 642 810 665 785 680 775 700 750 725 748 742 770 730 785 720 775 745 765 778 785 775 800 758 795 785 780 815 787 822 800 805 830 795 860 798 880 793 880 815 860 845 838 870 828 910 825 940 800 932 778 942 785 915 775 912 765 930 740 910 735 920 720 905 705 912 690 885 670 890 650 882 630 900 600 910 640 905 615 915 593 942 620 925 650 912 680 918 700 945 735 960 738 990 728 1011V1060H360V1011L352 980 342 940 343 880 335 840 345 855 380 865 345 825 325 795 325 785 365 787 395 790 410 825 422 825 400 785 375 762 340 750 310 745 303 720 305 670 330 645 330 628 360 622 370 605 385 615 405 615 405 635 420 650 430 690 430 740 445 805 440 760 437 730 463 750 445 720 445 695 470 695 485 705 485 735 500 742 500 715 480 690 455 680 450 648 470 655 515 672 538 678 540 700 535 725 543 742 545 700 543 650 530 605 550 618 575 650 590 657 575 630 550 600 525 575 515 558 505 540zM435 560L450 550 470 562 500 590 525 605 530 635 535 670 510 665 500 645 475 630 445 605 432 580zM215 777L285 783 290 810 290 855 250 870 250 873 300 865 310 880 312 920 320 945 340 975 352 1011V1060H55V1005L35 988 25 1000 35 1005 50 1000 57 970 50 945 72 920 75 885 105 870 118 840 140 842 170 795 190 790zM325 850L340 850 340 955 330 970 323 930zM650 545L675 542 690 537 688 560 675 582 655 570zM765 560L785 545 790 570 820 585 810 605 790 592 765 582zM972 322L985 328 985 355 965 395 955 385 957 350zM843 963L850 970 838 983 833 978zM815 672l8 4-4 18-8-8z"/>
<path class="bits" d="M830 700l10-18 8-2-4 12 14-18M715 85l8 20-12-8 6 28-8-14 12 0M710 120l8 12-12 12M728 78l8 14M708 100l14 10-14 14 18-4M765 70l6 18M800 60l12 2M740 54l3 3M747 37h2M843 140l3 2M666 180l2 2M664 195l3 4M820 208l14 20 10 18M812 206l10 20M685 195l10 14M788 272l8 22M834 242l8-4M420 86l2 10-5-3zM372 112h2M367 125h2M297 148l8 2-6 8zM285 197l-6 6M275 207h3M294 245h3M120 480l10 6-4 6-8-4zM112 462l14 4M142 471h3M140 488l6-1M100 448l10 10M570 560l20 8 12-4M580 556l24 16M612 388l14 8 4 10M600 500l34 28M626 526l16 4-8 10 20-4M770 534l-2 14M784 550l10 6-2 8M714 600l8 26M748 590v-8M740 588l-4 4M735 584l4 4M310 745l4-8M270 778l18 6-10 6M375 785l6 4M620 880l10-4 8 10-10 4M746 938h4M728 912l4 8M118 850v36M110 874l8 6M122 844l32 6M387 632h16M424 580l5 6M485 738l16-2M700 520h3M706 495l4 2M696 485l3 6M430 685l3 12M765 810l4 4M768 210l3 4M762 270l4 6M798 684l8 6M790 690l6-12M812 790l6 8 6-6M805 436l10 8M650 315l24 4M556 995v16M592 1011l12-4M635 1008l16-8M25 1000l6 12M645 620l6 8M860 232l4 2M870 240l-12 8"/>
</svg>
<g class="pts"><circle cx="998" cy="548" r="4.500"/><circle cx="991" cy="572.500" r="4.500"/><circle cx="991" cy="574" r="4.500"/><circle cx="1000" cy="579" r="4.500"/><circle cx="996" cy="585" r="4.500"/><circle cx="990.500" cy="586.500" r="4.500"/><circle cx="986" cy="588" r="4.500"/><circle cx="1013" cy="585" r="4.500"/><circle cx="1039.500" cy="593" r="4.500"/><circle cx="1064" cy="597" r="4.500"/><circle cx="1050.500" cy="604" r="4.500"/></g>
<g class="lbl"><text x="851" y="488.500" textLength="62" lengthAdjust="spacingAndGlyphs">Dillingham</text><text x="1000.500" y="585.500" textLength="67" lengthAdjust="spacingAndGlyphs">Bristol Bay</text><text x="1031.500" y="664.500" textLength="123" lengthAdjust="spacingAndGlyphs">Lake and Peninsula</text><text x="1304" y="532.500" textLength="98" lengthAdjust="spacingAndGlyphs">Kenai Peninsula</text><text x="1404" y="882.500" textLength="86" lengthAdjust="spacingAndGlyphs">Kodiak Island</text></g>
</svg>
</div>
</div>
</div>
</body>
</html>
```

FILE: styles.css
```css
* { box-sizing: border-box; }
body { margin: 0; background: #efefef; font-family: "Open Sans", "Noto Sans", sans-serif; font-size: 14.5px; color: #000; overflow: hidden; }
.defs { position: absolute; }
.window { width: 1886px; height: 927px; display: flex; flex-direction: column; overflow: hidden; }
h2 { margin: 0; font-size: 15px; font-weight: 400; letter-spacing: -.35px; line-height: 20px; }
ul { list-style: none; margin: 0; padding: 0; }
i, em { font-style: normal; }

.menubar { height: 22px; margin-top: -10px; flex: none; padding-left: 10px; display: grid; grid-template-columns: 61px 58px 58px 71px 87px 67px 61px 57px 97px 55px 84px 60px; font-size: 15px; letter-spacing: -.35px; line-height: 20px; align-items: start; }
.menubar u { text-underline-offset: 2px; text-decoration-thickness: 1px; }

.toolbar { height: 39px; flex: none; display: flex; align-items: center; border-top: 1px solid #d8d8d8; background: linear-gradient(#fbfbfb, #ececec); }
.toolbar + .toolbar { height: 40px; border-top: 1px solid #b4b4b4; border-bottom: 1px solid #b4b4b4; }
.ic { width: 33px; height: 24px; flex: none; padding: 0 4.500px; }
.off { opacity: .3; }
.grey { filter: grayscale(1); }
.flip { transform: scaleX(-1); }
.grip { width: 6px; height: 18px; margin: 0 6px; flex: none; background-image: linear-gradient(90deg, #b4b4b4 1px, transparent 1px), linear-gradient(#f4f4f4 0 0); background-image: conic-gradient(from 270deg at 1px 1px, #b0b0b0 90deg, transparent 0); background-size: 3px 3px; }
.grip.first { margin: 0 3px 0 5px; }
.grip.last { margin-right: 7px; }
.sep { width: 7px; height: 19px; flex: none; border-left: 1px solid #ccc; margin-left: 3px; margin-right: -3px; }
.sep.wide { width: 9px; }
.pressed { flex: none; width: 33px; height: 31px; display: flex; align-items: center; background: #dcdcdc; border: 1px solid #aaa; border-radius: 3px; }
.pressed .ic { margin: 0 -1px; }
.arr { width: 15px; height: 5px; flex: none; background: #555; clip-path: polygon(3px 0, 12px 0, 7.500px 5px); }
.dim { opacity: .5; }
.menuic { position: relative; display: flex; }
.menuic .arr { position: absolute; right: -1px; bottom: 0; }

.main { flex: 1; display: flex; min-height: 0; }
.left { width: 762px; display: flex; flex-direction: column; }
.dock { display: flex; flex-direction: column; }
.dock header { height: 22px; display: flex; justify-content: space-between; padding: 0 1px 0 3px; }
.wb { width: 26px; height: 12px; margin-top: 5px; }
.mini { display: flex; align-items: center; gap: 9.200px; padding-left: 7px; }
.mini svg { width: 16px; height: 16px; }
.mini .arr { margin: 0 -3px 0 -6px; }
.browser { height: 309px; }
.browser .mini { height: 28px; padding-bottom: 4px; }
.view { flex: 1; min-height: 0; display: flex; background: #fff; border: 1px solid #b4b4b4; border-left: 0; overflow: hidden; }
.files { flex: 1; padding-top: 0; }
.files li { height: 22px; width: 396px; padding-left: 278px; display: flex; align-items: center; font-size: 14.5px; letter-spacing: -.37px; }
.files svg { width: 20px; height: 15px; margin: -3px 6px 0 0; fill: url(#gShp); }
.files .hover { background: #efefef; }
.files .hover svg { fill: url(#gShpOn); }
.scroll { width: 17px; flex: none; border-left: 1px solid #b4b4b4; display: flex; flex-direction: column; background: #e6e6e6; }
.scroll .track { flex: 1; }
.scroll .t1 { flex: none; height: 104px; }
.scroll .thumb { background: linear-gradient(90deg, #fff, #ececec); border: solid #b4b4b4; border-width: 1px 0; }
.h1 { height: 34px; }
.h2 { height: 404px; margin-top: -1px; }
.up, .down { height: 17px; background: #fafafa; border-bottom: 1px solid #b4b4b4; position: relative; }
.down { border: 0; border-top: 1px solid #b4b4b4; }
.up::after, .down::after { content: ""; position: absolute; left: 3px; top: 5px; width: 10px; height: 5px; background: #555; clip-path: polygon(50% 0, 100% 100%, 0 100%); }
.down::after { clip-path: polygon(0 0, 100% 0, 50% 100%); }
.hsplit { height: 7px; display: flex; }
.hsplit i { margin: 4px 0 0 373px; width: 18px; height: 1px; background: repeating-linear-gradient(90deg, #b0b0b0 0 1px, transparent 1px 3px); }
.layers { flex: 1; min-height: 0; }
.layers header { height: 20px; }
.layers .wb { margin-top: 4px; }
.layers .mini { height: 30px; padding-bottom: 1px; }
.layers .view { border-bottom: 0; }
.vsplit { width: 7px; padding: 420px 0 0 4px; }
.vsplit i { display: block; width: 1px; height: 20px; background: repeating-linear-gradient(#b0b0b0 0 1px, transparent 1px 3px); }

.tree { flex: 1; }
.tree li { height: 22px; display: flex; align-items: center; padding: 0 1px 0 28px; position: relative; font-weight: 700; font-style: italic; color: #7d7d7d; font-size: 15px; letter-spacing: .05px; }
.tree li::after { content: ""; width: 4px; height: 18px; background: #e3e3e3; margin-left: 2px; order: 3; }
.tree li > span { flex: 1; padding-left: 6px; }
.tree li > .near { padding-left: 3px; }
.tree em { width: 19px; height: 19px; background: #f4f4f4; border: 1px solid #ddd; border-radius: 3px; display: flex; align-items: center; justify-content: center; color: #888; }
.tree em svg { width: 14px; height: 14px; }
.tree .sel { background: linear-gradient(90deg, #0078d7 0 74px, transparent 74px), linear-gradient(#1b87df, #0a7bdc); color: #fff; font-style: normal; letter-spacing: -.45px; text-decoration: underline; }
.tree .sel em { color: #7f9fbd; }
.tree .act { color: #000; font-style: normal; letter-spacing: -.4px; }
.cb { width: 17px; height: 17px; flex: none; background: #fff; border: 1px solid #bbb; position: relative; }
.cb.on::after { content: ""; position: absolute; left: 4.500px; top: 1px; width: 6px; height: 11px; border: solid #000; border-width: 0 2.200px 2.200px 0; transform: rotate(32deg) skewY(8deg); }
.sq { width: 19px; height: 19px; margin-left: 6px; border: 1px solid rgba(35,35,35,.75); }
.sq.none { border-color: transparent; }
.pt { width: 11px; height: 11px; margin: 0 4.500px 0 10px; border: 1px solid #333; border-radius: 50%; }
.ln { width: 19px; height: 1px; margin-left: 6px; }
.ed, .ras { width: 19px; height: 19px; margin-left: 6px; }
.tree .leaf { padding-left: 46px; font-weight: 400; font-style: normal; color: #000; font-size: 14.5px; letter-spacing: -.5px; }
.leaf .sq { margin-left: 7px; width: 17px; height: 17px; }
.open::before { content: ""; position: absolute; left: 8px; top: 8px; width: 10px; height: 5px; background: #555; clip-path: polygon(0 0, 100% 0, 50% 100%); }

.right { flex: 1; display: flex; flex-direction: column; min-width: 0; }
.right h2 { padding: 0 0 0 4px; height: 19px; line-height: 19px; }
.combo { height: 28px; display: flex; align-items: center; border: 1px solid #aaa; border-radius: 3px; font-size: 13px; }
.combo.layer { border-right: 0; border-radius: 3px 0 0 3px; background: linear-gradient(#fff, #ececec); padding-left: 7px; gap: 3px; letter-spacing: -.4px; }
.combo.field { margin: 3px 3px 3px 0; background: #fff; font-style: italic; padding-left: 4px; justify-content: space-between; letter-spacing: -.2px; }
.combo.field i { width: 27px; height: 26px; display: flex; align-items: center; justify-content: center; border-left: 1px solid #ccc; background: linear-gradient(#fff, #f0f0f0); }
.stats { height: 193px; background: #fff; border: 1px solid #b4b4b4; border-right: 0; overflow: hidden; letter-spacing: -.3px; }
.hd { display: flex; height: 25px; background: #efefef; }
.hd span { background: linear-gradient(#fff, #eee); border-bottom: 1px solid #aaa; border-right: 1px solid #c8c8c8; display: flex; align-items: center; justify-content: center; width: 233px; padding-top: 2px; }
.hd span + span { width: 62px; border-right: 0; }
.tr { display: flex; height: 37px; }
.tr span { width: 233px; padding-left: 3px; border: solid #c8c8c8; border-width: 0 1px 1px 0; display: flex; align-items: center; white-space: nowrap; }
.tr span:first-child { letter-spacing: -.1px; }
.tr span + span { width: 62px; }
.alt span { background: #e8e6e3; }
.foot { height: 30px; display: flex; align-items: center; padding: 1px 4px 0 0; font-size: 13px; }
.foot span { flex: 1; padding-left: 6px; letter-spacing: -.34px; }
.foot svg { width: 17px; height: 17px; margin-right: 13px; }
.foot .rf { width: 19px; height: 19px; margin-right: -3px; }
.hsplit.r i { margin: 3px 0 0 568px; }
.map { width: 1117px; height: 526px; flex: none; border: 1px solid #aaa; border-width: 1px 0 0 1px; background: #fff; }
.map path { vector-effect: non-scaling-stroke; stroke-linejoin: round; }
.land { fill: #ffffe9; stroke: #a2a297; stroke-width: 1.4; }
.sea { fill: #fff; stroke: #a2a297; stroke-width: 1.4; }
.edge { fill: none; stroke: #7d7d73; stroke-width: 1.4; }
.bits { fill: none; stroke: #98988c; stroke-width: 1.8; }
.pick { fill: #ff0; stroke: #333300; stroke-width: 1.2; }
.pts circle { fill: #d5b43c; stroke: #5c4d14; }
.lbl { font-size: 14.8px; font-family: "Open Sans", "Noto Sans", sans-serif; }
```
